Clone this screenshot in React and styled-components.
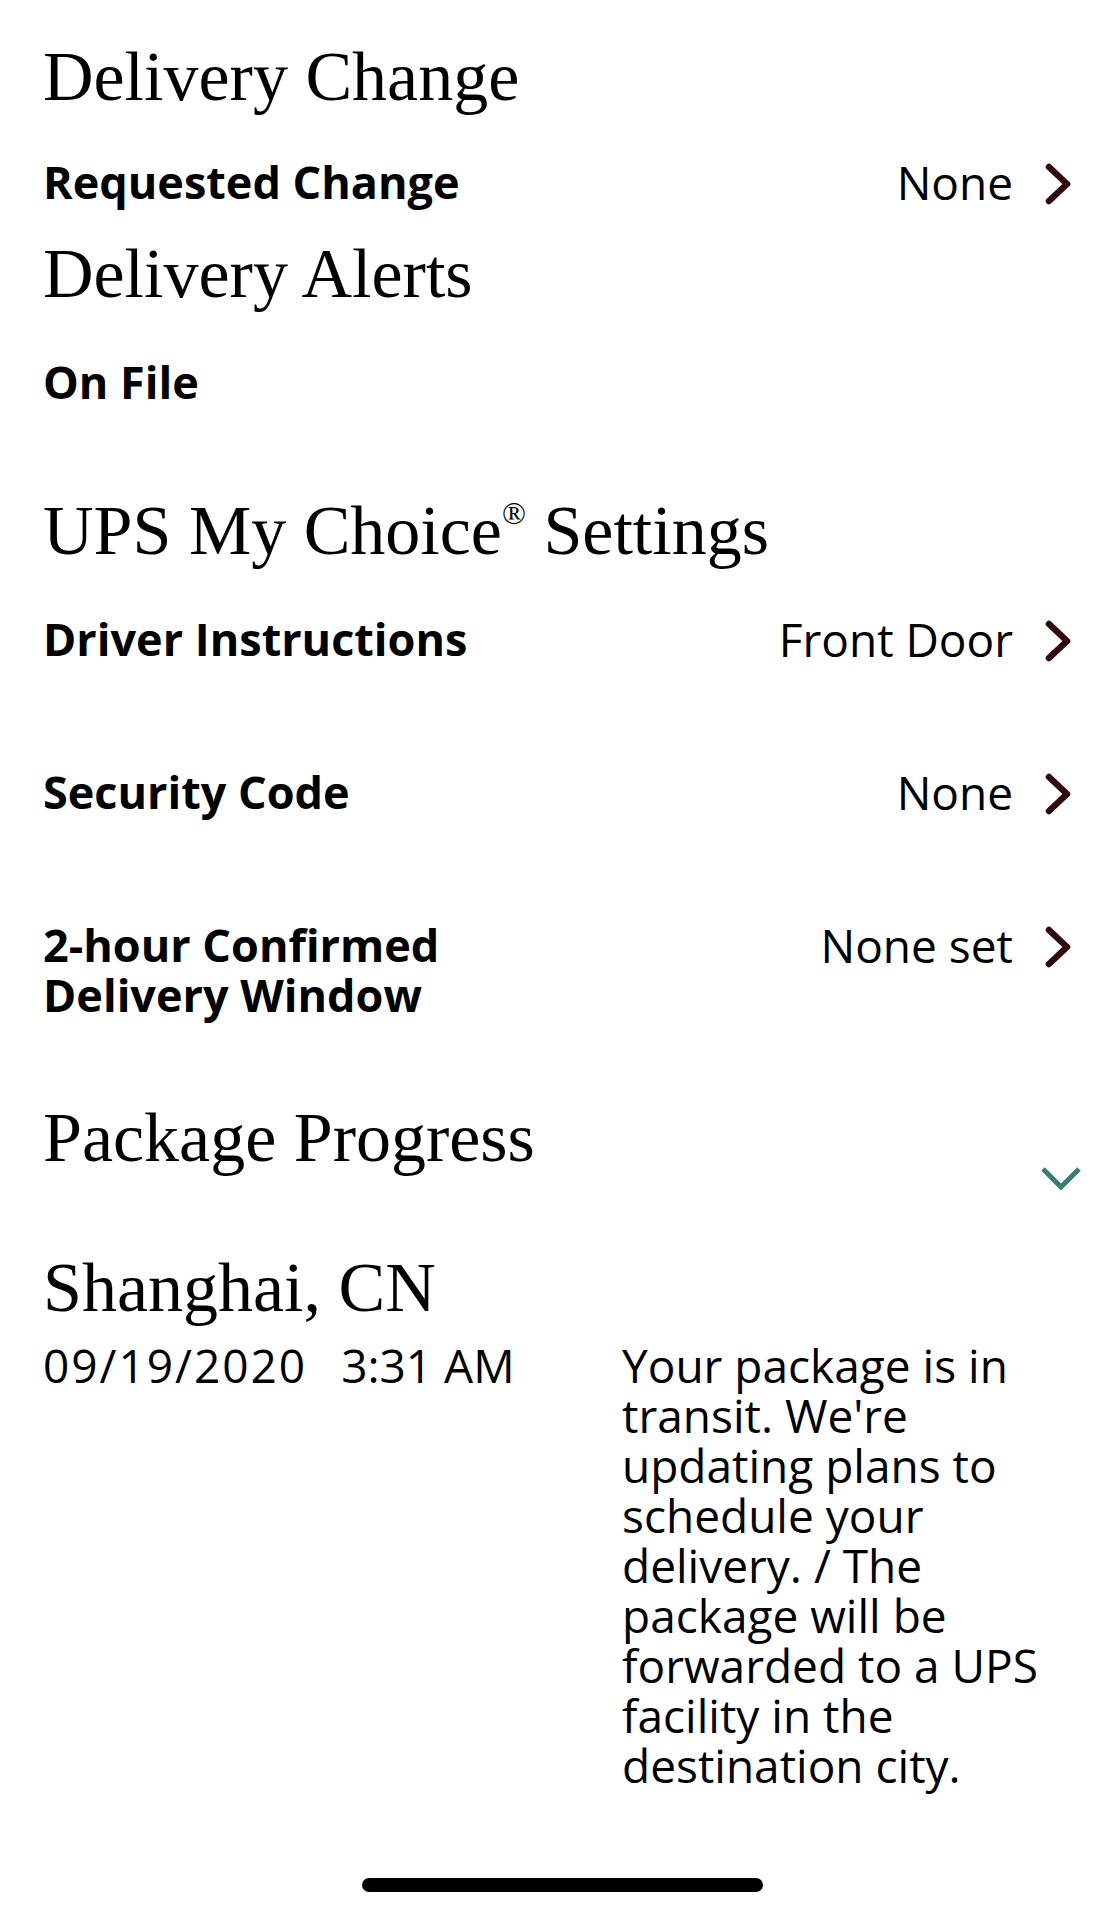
import React from 'react';
import styled, { createGlobalStyle } from 'styled-components';

const GlobalStyle = createGlobalStyle`
    html, body {
        margin: 0;
        padding: 0;
        background: #fff;
    }
    body {
        font-family: "Open Sans", "Noto Sans", sans-serif;
        color: #000;
    }
`

const Screen = styled.div`
    width: 1112px;
    min-height: 1916px;
    box-sizing: border-box;
    padding: 37px 40px 0 43px;
    display: flex;
    flex-direction: column;
`

const Section = styled.section`
    margin-bottom: ${props => props.$after || 0}px;
`

const SectionTitle = styled.h2`
    margin: 0 0 ${props => props.$below ?? 43}px 0;
    font-family: "Liberation Serif", "Times New Roman", serif;
    font-weight: 400;
    font-size: 70px;
    line-height: 80px;
`

const SettingList = styled.div`
    display: flex;
    flex-direction: column;
    gap: 103px;
`

const Row = styled.div`
    display: flex;
    align-items: flex-start;
    justify-content: space-between;
    font-size: 46px;
    line-height: 50px;
`

const Label = styled.div`
    font-weight: 700;
    font-size: 45px;
    white-space: pre-line;
`

const Value = styled.div`
    display: flex;
    align-items: center;
    gap: 31px;
    font-weight: 400;

    svg {
        margin-top: 4px;
    }
`

const ProgressHeader = styled.div`
    display: flex;
    justify-content: space-between;
    align-items: flex-start;
    margin-bottom: 57px;
`

const ExpandToggle = styled.button`
    display: flex;
    border: 0;
    background: none;
    padding: 0;
    margin: 67px -11px 0 0;
    cursor: pointer;
`

const EventGrid = styled.div`
    display: grid;
    grid-template-columns: 579px 1fr;
    font-size: 46px;
    line-height: 50px;
`

const Stamp = styled.div`
    display: flex;
    gap: 34px;
    align-self: start;
`

const StampDate = styled.span`
    letter-spacing: 2px;
`

const Description = styled.p`
    margin: 0;
    max-width: 452px;
`

const HomeBar = styled.div`
    width: 401px;
    height: 14px;
    border-radius: 7px;
    background: #000;
    margin: auto 0 24px 319px;
`

const Reg = styled.sup`
    font-size: 0.45em;
    vertical-align: 0.95em;
    line-height: 0;
`

const ChevronRight = () => (
    <svg width="28" height="44" viewBox="0 0 28 44" aria-hidden="true">
        <polyline
            points="5,5 23,22 5,39"
            fill="none"
            stroke="#320a0b"
            strokeWidth="6.5"
            strokeLinecap="round"
            strokeLinejoin="round"
        />
    </svg>
)

const ChevronDown = () => (
    <svg width="44" height="26" viewBox="0 0 44 26" aria-hidden="true">
        <polyline
            points="4,4 22,22 40,4"
            fill="none"
            stroke="#3c7c75"
            strokeWidth="5"
        />
    </svg>
)

const SettingRow = ({ label, value }) => (
    <Row>
        <Label>{label}</Label>
        {value && (
            <Value>
                {value}
                <ChevronRight />
            </Value>
        )}
    </Row>
)

const settings = [
    { label: 'Driver Instructions', value: 'Front Door' },
    { label: 'Security Code', value: 'None' },
    { label: '2-hour Confirmed\nDelivery Window', value: 'None set' },
]

export default function App() {
    return (
        <Screen>
            <GlobalStyle />
            <Section $after={27}>
                <SectionTitle $below={40}>Delivery Change</SectionTitle>
                <SettingRow label="Requested Change" value="None" />
            </Section>
            <Section $after={84}>
                <SectionTitle>Delivery Alerts</SectionTitle>
                <SettingRow label="On File" />
            </Section>
            <Section $after={78}>
                <SectionTitle>UPS My Choice<Reg>®</Reg> Settings</SectionTitle>
                <SettingList>
                    {settings.map(s => <SettingRow key={s.label} {...s} />)}
                </SettingList>
            </Section>
            <Section>
                <ProgressHeader>
                    <SectionTitle $below={0}>Package Progress</SectionTitle>
                    <ExpandToggle aria-label="Collapse">
                        <ChevronDown />
                    </ExpandToggle>
                </ProgressHeader>
                <SectionTitle $below={12}>Shanghai, CN</SectionTitle>
                <EventGrid>
                    <Stamp>
                        <StampDate>09/19/2020</StampDate>
                        <span>3:31 AM</span>
                    </Stamp>
                    <Description>
                        Your package is in transit. We're updating plans to schedule your delivery. / The package will be forwarded to a UPS facility in the destination city.
                    </Description>
                </EventGrid>
            </Section>
            <HomeBar />
        </Screen>
    )
}
